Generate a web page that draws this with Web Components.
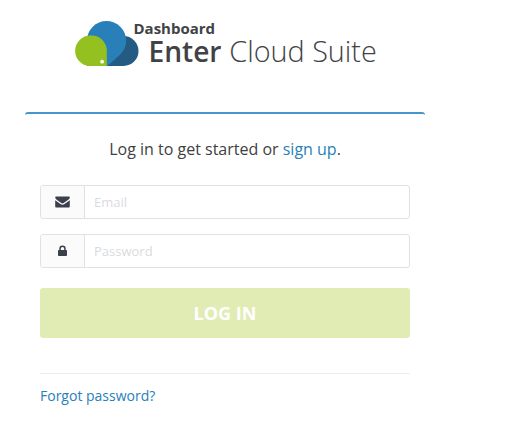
<!DOCTYPE html>
<html lang="en">
<head>
<meta charset="utf-8">
<title>Enter Cloud Suite</title>
<style>
body { margin: 0; background: #fff; color: #3e3f42; font-family: "Open Sans", "Noto Sans", sans-serif; }
</style>
</head>
<body>
<login-page></login-page>
<script>
const define = (name, html) => customElements.define(name, class extends HTMLElement {
  constructor() {
    super();
    const t = document.createElement('template');
    t.innerHTML = html;
    this.attachShadow({ mode: 'open' }).append(t.content.cloneNode(true));
  }
});

define('brand-logo', `
<style>
:host { display: block; height: 52px; }
svg { display: block; }
text { font-family: "Open Sans", "Noto Sans", sans-serif; fill: #414246; }
</style>
<svg width="310" height="52" viewBox="70 18 310 52" role="img">
  <path d="M123.500 36a15 15 0 0 1 0 30H106V40Z" fill="#235b83"/>
  <path d="M106.500 21a19.600 19.600 0 0 1 19.600 19.600c0 6-2.300 10.500-6.500 14.500L107.500 66H87V40.600A19.500 19.600 0 0 1 106.500 21Z" fill="#2980b9"/>
  <path d="M90.500 35.500h1A15.300 15.300 0 0 1 106.800 50.800V66H90.300a15.250 15.250 0 0 1 .2-30.500Z" fill="#94c11f"/>
  <circle cx="102.100" cy="61.700" r="1.900" fill="#fff"/>
  <text x="133.500" y="34" font-size="15" font-weight="700" textLength="81.500" lengthAdjust="spacingAndGlyphs">Dashboard</text>
  <text x="148.500" y="62" font-size="29" font-weight="600" textLength="73" lengthAdjust="spacingAndGlyphs">Enter</text>
  <text x="229.300" y="62" font-size="29.500" font-weight="300" textLength="147.500" lengthAdjust="spacingAndGlyphs">Cloud Suite</text>
</svg>`);

define('icon-field', `
<style>
:host { display: flex; box-sizing: border-box; height: 34px; border: 1px solid #e0e0e6; border-radius: 3px; overflow: hidden; }
.icon { box-sizing: border-box; width: 44px; display: flex; align-items: center; justify-content: center; background: #fbfbfb; border-right: 1px solid #e0e0e6; }
.value { flex: 1; padding-left: 9px; font-size: 13px; line-height: 33px; color: #dadbde; }
</style>
<div class="icon"><slot name="icon"></slot></div>
<div class="value"><slot></slot></div>`);

define('submit-button', `
<style>
:host { display: flex; height: 50px; align-items: center; justify-content: center; background: #e1ecb5; border-radius: 3px; color: #fff; font-size: 18px; font-weight: 700; }
</style>
<slot></slot>`);

define('text-link', `<style>:host { display: inline; color: #2980b9; }</style><slot></slot>`);

define('login-card', `
<style>
:host { display: block; box-sizing: border-box; width: 400px; border-top: 2px solid #4695cf; border-radius: 3px; padding: 24px 15px 0; }
p { margin: 0; text-align: center; font-size: 16px; line-height: 22px; }
.form { display: grid; gap: 15px; margin-top: 25px; }
submit-button { margin-top: 5px; }
footer { margin-top: 35px; border-top: 1px solid #ededed; padding-top: 12px; font-size: 14px; line-height: 20px; }
svg { display: block; fill: #3c404b; }
</style>
<p>Log in to get started or <text-link>sign up</text-link>.</p>
<div class="form">
  <icon-field>
    <svg slot="icon" width="15" height="12" viewBox="0 0 15 12"><path d="M1.300.5h12.400c.7 0 1.100.4 1.100 1 0 .8-.5 1.500-1.200 2L8.700 7c-.8.600-1.600.6-2.400 0L1.400 3.500C.7 3 .2 2.300.2 1.600.2.900.6.500 1.300.500ZM.2 4.200l5.300 3.700c1.300 1 2.700 1 4 0l5.300-3.700v6c0 .8-.5 1.300-1.300 1.300h-12C.7 11.500.2 11 .2 10.200Z"/></svg>
    Email
  </icon-field>
  <icon-field>
    <svg slot="icon" width="9" height="12" viewBox="0 0 9 12"><path fill-rule="evenodd" d="M1.300 5V3.600a3.200 3.200 0 0 1 6.400 0V5h.5q.8 0 .8.800v4.400q0 .8-.8.800H.8Q0 11 0 10.200V5.800Q0 5 .8 5ZM2.800 5h3.400V3.600a1.700 1.700 0 0 0-3.400 0Z"/></svg>
    Password
  </icon-field>
  <submit-button>LOG IN</submit-button>
</div>
<footer><text-link>Forgot password?</text-link></footer>`);

define('login-page', `
<style>
:host { display: flex; flex-direction: column; box-sizing: border-box; height: 430px; padding: 18px 0 0 25px; gap: 42px; }
brand-logo { margin-left: 45px; }
</style>
<brand-logo></brand-logo>
<login-card></login-card>`);
</script>
</body>
</html>
